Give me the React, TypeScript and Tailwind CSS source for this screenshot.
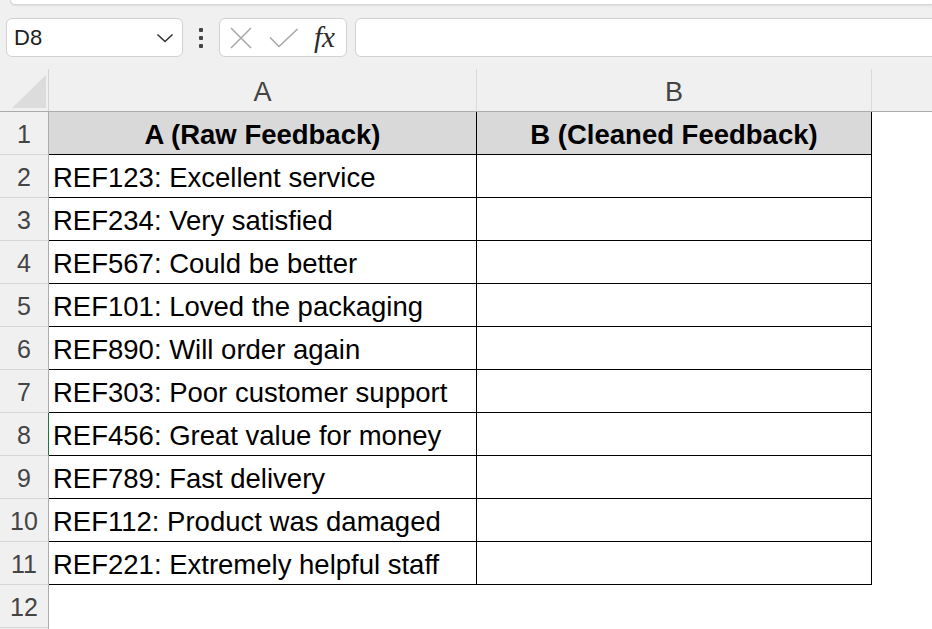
import React from "react";

const rows: string[] = [
  "REF123: Excellent service",
  "REF234: Very satisfied",
  "REF567: Could be better",
  "REF101: Loved the packaging",
  "REF890: Will order again",
  "REF303: Poor customer support",
  "REF456: Great value for money",
  "REF789: Fast delivery",
  "REF112: Product was damaged",
  "REF221: Extremely helpful staff",
];

const font = { fontFamily: '"Liberation Sans", Arial, sans-serif' };

function FormulaBar() {
  return (
    <div className="mt-[13px] flex h-[39px] items-center pl-[6px]">
      <div className="flex h-[39px] w-[177px] shrink-0 items-center justify-between rounded-[6px] border border-[#d1d1d1] bg-white pl-[7px] pr-[8px]">
        <span className="text-[22px] leading-none text-[#1f1f1f]">D8</span>
        <svg width="18" height="10" viewBox="0 0 18 10" fill="none">
          <path d="M1.5 1.5 L9 8.5 L16.5 1.5" stroke="#333" strokeWidth="1.6" />
        </svg>
      </div>
      <div className="ml-[15px] flex w-[5px] shrink-0 flex-col items-center gap-[4px]">
        <div className="h-[4px] w-[4px] rounded-[1px] bg-[#444]" />
        <div className="h-[4px] w-[4px] rounded-[1px] bg-[#444]" />
        <div className="h-[4px] w-[4px] rounded-[1px] bg-[#444]" />
      </div>
      <div className="ml-[16px] flex h-[39px] w-[128px] shrink-0 items-center rounded-[6px] border border-[#d1d1d1] bg-white pl-[10px]">
        <svg width="22" height="22" viewBox="0 0 22 22" fill="none">
          <path d="M1 1 L21 21 M21 1 L1 21" stroke="#a6a6a6" strokeWidth="1.5" />
        </svg>
        <svg className="ml-[17px]" width="30" height="20" viewBox="0 0 30 20" fill="none">
          <path d="M1 9.5 L10 18.5 L28.5 1" stroke="#a6a6a6" strokeWidth="1.5" />
        </svg>
        <span
          className="ml-[15px] text-[29px] italic leading-none text-[#2b2b2b]"
          style={{ fontFamily: '"Liberation Serif", "Times New Roman", serif' }}
        >
          fx
        </span>
      </div>
      <div className="ml-[8px] h-[39px] w-[620px] shrink-0 rounded-[6px] border border-[#d1d1d1] bg-white" />
    </div>
  );
}

function ColumnHeaders() {
  return (
    <div className="mt-[12px] flex h-[43px] border-b border-[#ababab] bg-[#f0f0f0]">
      <div className="flex w-[49px] shrink-0 items-end border-r border-[#d4d4d4] pb-[3px] pl-[12px]">
        <svg width="34" height="33" viewBox="0 0 34 33">
          <polygon points="0,33 34,33 34,0" fill="#dcdcdc" />
        </svg>
      </div>
      <div className="flex w-[428px] shrink-0 items-center justify-center border-r border-[#dadada] pt-[5px] text-[27px] text-[#444]">
        A
      </div>
      <div className="flex w-[395px] shrink-0 items-center justify-center border-r border-[#dadada] pt-[5px] text-[27px] text-[#444]">
        B
      </div>
      <div className="flex-1" />
    </div>
  );
}

function Row({ n }: { n: number }) {
  const isHeader = n === 1;
  const inTable = n <= 11;
  const text = n >= 2 && n <= 11 ? rows[n - 2] : "";
  const selected = n === 8;
  return (
    <div className="flex h-[43px] shrink-0">
      <div
        className={
          "flex w-[49px] shrink-0 items-center justify-center border-b border-r border-b-[#d6d6d6] bg-[#f0f0f0] pt-[3px] text-[25px] text-[#444] " +
          (selected ? "border-r-[#217346]" : "border-r-[#ababab]")
        }
      >
        {n <= 12 ? n : ""}
      </div>
      {inTable ? (
        <>
          <div
            className={
              "flex w-[428px] shrink-0 items-end border-b border-r border-black pb-[4px] text-[27.5px] leading-[31px] text-black " +
              (isHeader ? "justify-center bg-[#d9d9d9] font-bold" : "bg-white pl-[4px]")
            }
          >
            {isHeader ? "A (Raw Feedback)" : text}
          </div>
          <div
            className={
              "flex w-[395px] shrink-0 items-end justify-center border-b border-r border-black pb-[4px] text-[27.5px] leading-[31px] text-black " +
              (isHeader ? "bg-[#d9d9d9] font-bold" : "bg-white")
            }
          >
            {isHeader ? "B (Cleaned Feedback)" : ""}
          </div>
        </>
      ) : (
        <div className="w-[823px] shrink-0 bg-white" />
      )}
      <div className="flex-1 bg-white" />
    </div>
  );
}

export default function App() {
  return (
    <div className="h-[629px] w-[932px] overflow-hidden bg-[#f0f0f0]" style={font}>
      <div className="ml-[10px] h-[5px] rounded-bl-[8px] border-b border-l border-[#d5d5d5] bg-white shadow-[0_1px_2px_rgba(0,0,0,0.08)]" />
      <FormulaBar />
      <ColumnHeaders />
      {Array.from({ length: 13 }, (_, i) => (
        <Row key={i} n={i + 1} />
      ))}
    </div>
  );
}
